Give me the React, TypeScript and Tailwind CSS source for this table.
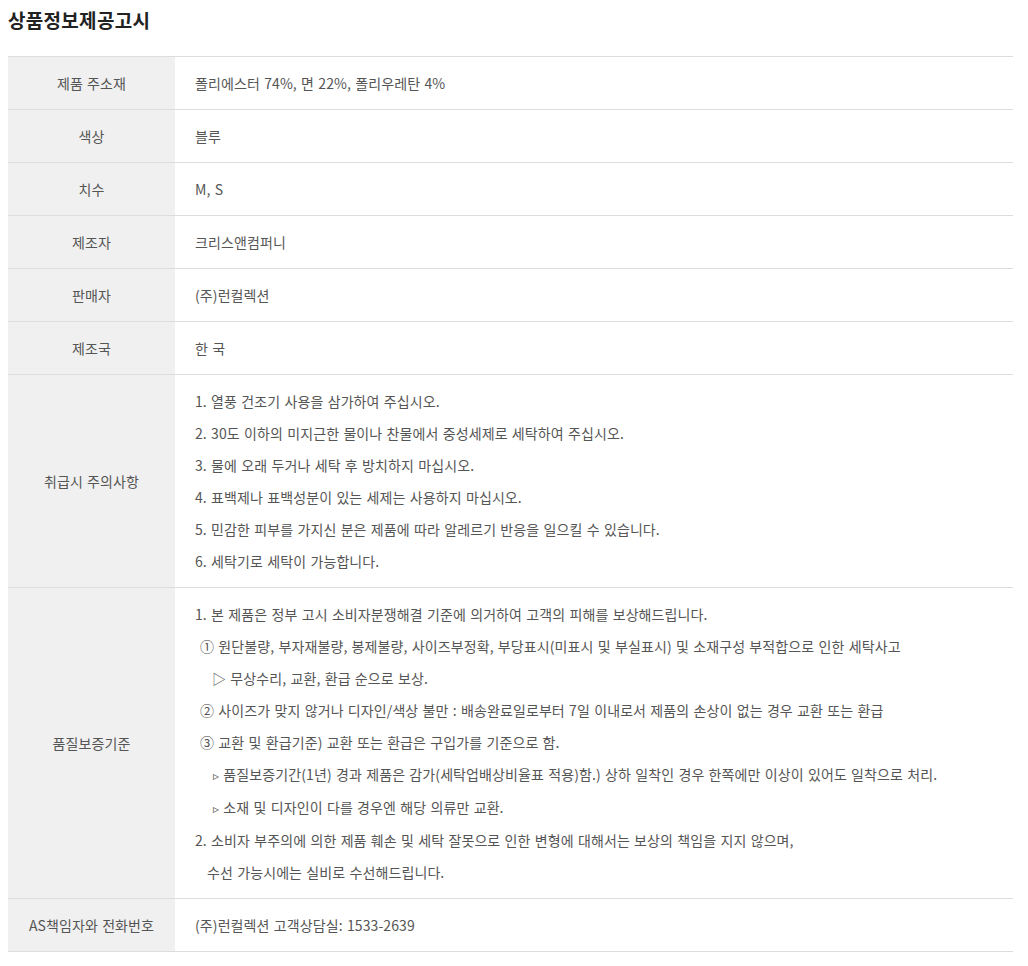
import React from "react";

type Row = {
    label: string;
    lines: React.ReactNode[];
};

const rows: Row[] = [
    { label: "제품 주소재", lines: ["폴리에스터 74%, 면 22%, 폴리우레탄 4%"] },
    { label: "색상", lines: ["블루"] },
    { label: "치수", lines: ["M, S"] },
    { label: "제조자", lines: ["크리스앤컴퍼니"] },
    { label: "판매자", lines: ["(주)런컬렉션"] },
    { label: "제조국", lines: ["한 국"] },
    {
        label: "취급시 주의사항",
        lines: [
            "1. 열풍 건조기 사용을 삼가하여 주십시오.",
            "2. 30도 이하의 미지근한 물이나 찬물에서 중성세제로 세탁하여 주십시오.",
            "3. 물에 오래 두거나 세탁 후 방치하지 마십시오.",
            "4. 표백제나 표백성분이 있는 세제는 사용하지 마십시오.",
            "5. 민감한 피부를 가지신 분은 제품에 따라 알레르기 반응을 일으킬 수 있습니다.",
            "6. 세탁기로 세탁이 가능합니다.",
        ],
    },
    {
        label: "품질보증기준",
        lines: [
            "1. 본 제품은 정부 고시 소비자분쟁해결 기준에 의거하여 고객의 피해를 보상해드립니다.",
            <span className="pl-[5px]">
                ① 원단불량, 부자재불량, 봉제불량, 사이즈부정확, 부당표시(미표시 및 부실표시) 및 소재구성 부적합으로 인한 세탁사고
            </span>,
            <span className="pl-[17px]">▷ 무상수리, 교환, 환급 순으로 보상.</span>,
            <span className="pl-[5px]">
                ② 사이즈가 맞지 않거나 디자인/색상 불만 : 배송완료일로부터 7일 이내로서 제품의 손상이 없는 경우 교환 또는 환급
            </span>,
            <span className="pl-[5px]">③ 교환 및 환급기준) 교환 또는 환급은 구입가를 기준으로 함.</span>,
            <span className="pl-[18px]">
                <span className="text-[12px]">▹</span> 품질보증기간(1년) 경과 제품은 감가(세탁업배상비율표 적용)함.) 상하 일착인 경우 한쪽에만 이상이 있어도 일착으로 처리.
            </span>,
            <span className="pl-[18px]">
                <span className="text-[12px]">▹</span> 소재 및 디자인이 다를 경우엔 해당 의류만 교환.
            </span>,
            "2. 소비자 부주의에 의한 제품 훼손 및 세탁 잘못으로 인한 변형에 대해서는 보상의 책임을 지지 않으며,",
            <span className="pl-[12px]">수선 가능시에는 실비로 수선해드립니다.</span>,
        ],
    },
    { label: "AS책임자와 전화번호", lines: ["(주)런컬렉션 고객상담실: 1533-2639"] },
];

export default function App(): React.ReactElement {
    return (
        <div
            className="bg-white px-2 pt-[6px] pb-4 text-[#555]"
            style={{ fontFamily: '"Noto Sans CJK KR", "Noto Sans", sans-serif' }}>
            <h2 className="text-[19px] font-bold leading-[28px] tracking-[0.3px] text-[#222]">
                상품정보제공고시
            </h2>
            <table className="mt-[22px] w-[1005px] border-collapse border-t border-[#ddd] text-[14px] tracking-[0.1px] [word-spacing:1px]">
                <tbody>
                    {rows.map((row) => (
                        <tr key={row.label} className="border-b border-[#ddd]">
                            <th className="w-[167px] bg-[#f0f0f0] py-[10px] text-center align-middle font-normal leading-[32px]">
                                {row.label}
                            </th>
                            <td className="py-[10px] pl-[20px] leading-[32px]">
                                {row.lines.map((line, i) => (
                                    <div key={i} className="whitespace-nowrap">
                                        {line}
                                    </div>
                                ))}
                            </td>
                        </tr>
                    ))}
                </tbody>
            </table>
        </div>
    );
}
